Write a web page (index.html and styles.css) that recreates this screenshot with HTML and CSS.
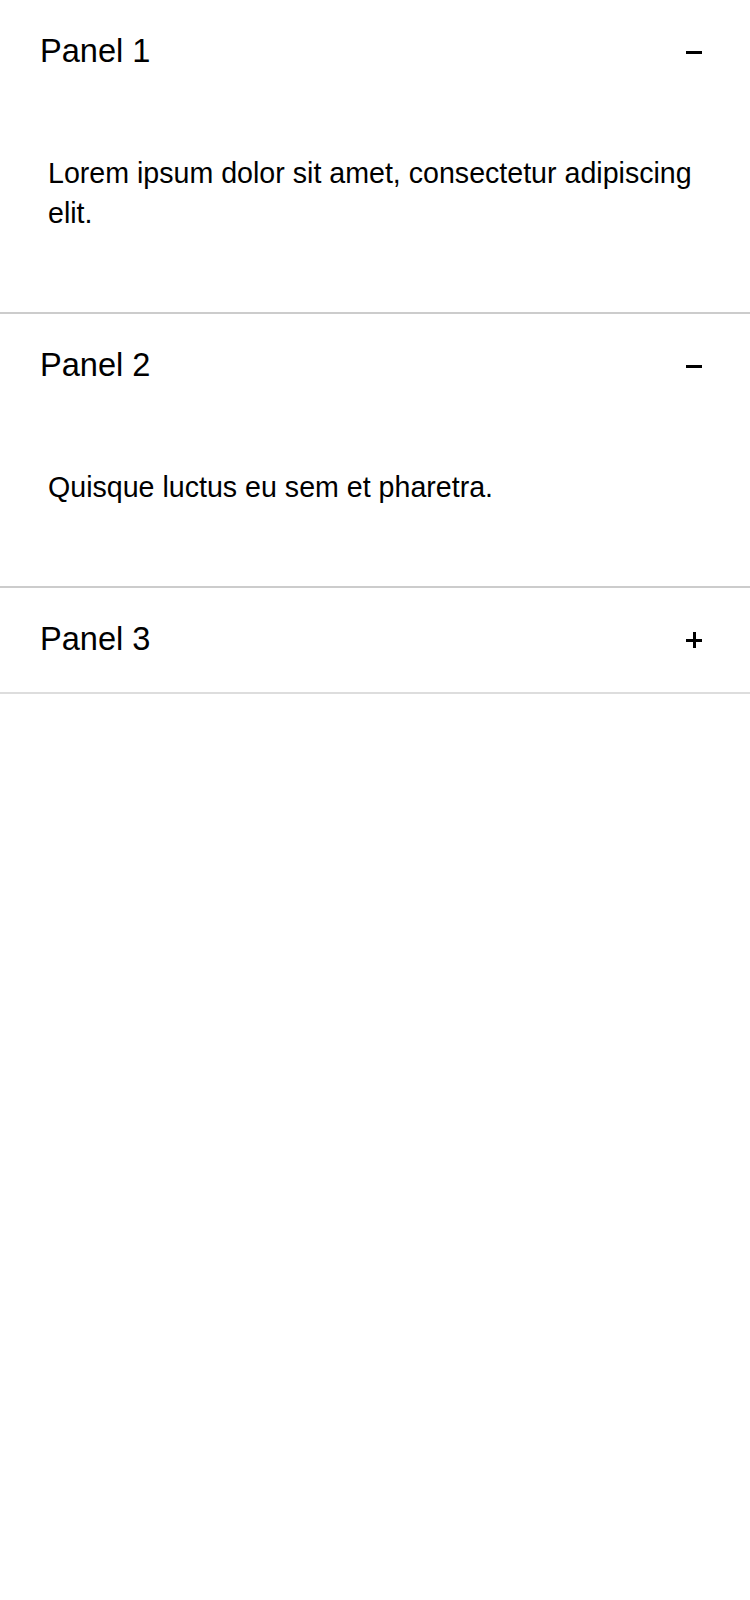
FILE: index.html
```html
<!DOCTYPE html>
<html lang="en">
<head>
<meta charset="utf-8">
<title>Accordion</title>
<link rel="stylesheet" href="styles.css">
</head>
<body>
<div class="accordion">
  <section class="panel panel-open">
    <div class="panel-header">
      <span class="panel-title">Panel 1</span>
      <span class="icon icon-minus"></span>
    </div>
    <div class="panel-body">
      <p>Lorem ipsum dolor sit amet, consectetur adipiscing elit.</p>
    </div>
  </section>
  <section class="panel panel-open">
    <div class="panel-header">
      <span class="panel-title">Panel 2</span>
      <span class="icon icon-minus"></span>
    </div>
    <div class="panel-body">
      <p>Quisque luctus eu sem et pharetra.</p>
    </div>
  </section>
  <section class="panel panel-closed">
    <div class="panel-header">
      <span class="panel-title">Panel 3</span>
      <span class="icon icon-plus"></span>
    </div>
  </section>
</div>
</body>
</html>
```

FILE: styles.css
```css
html, body {
  margin: 0;
  padding: 0;
  background: #ffffff;
}

body {
  font-family: "Liberation Sans", Arial, sans-serif;
  color: #000000;
}

.accordion {
  display: flex;
  flex-direction: column;
}

.panel {
  border-bottom: 2px solid #cccccc;
}

.panel-closed {
  border-bottom-color: #dddddd;
}

.panel-header {
  height: 104px;
  display: flex;
  align-items: center;
  justify-content: space-between;
  padding: 0 48px 0 40px;
}

.panel-title {
  font-size: 32.6px;
  line-height: 1;
  margin-top: -2px;
}

.icon {
  position: relative;
  width: 16px;
  height: 16px;
  flex: none;
}

.icon::before,
.icon::after {
  content: "";
  position: absolute;
  background: #000000;
}

.icon::before {
  left: 0;
  right: 0;
  top: 6.5px;
  height: 3px;
}

.icon-minus::after {
  display: none;
}

.icon-plus::after {
  top: 0;
  bottom: 0;
  left: 6.5px;
  width: 3px;
}

.panel-body {
  padding: 49px 48px 79px 48px;
}

.panel-body p {
  margin: 0;
  font-size: 28.6px;
  line-height: 40px;
}
```
